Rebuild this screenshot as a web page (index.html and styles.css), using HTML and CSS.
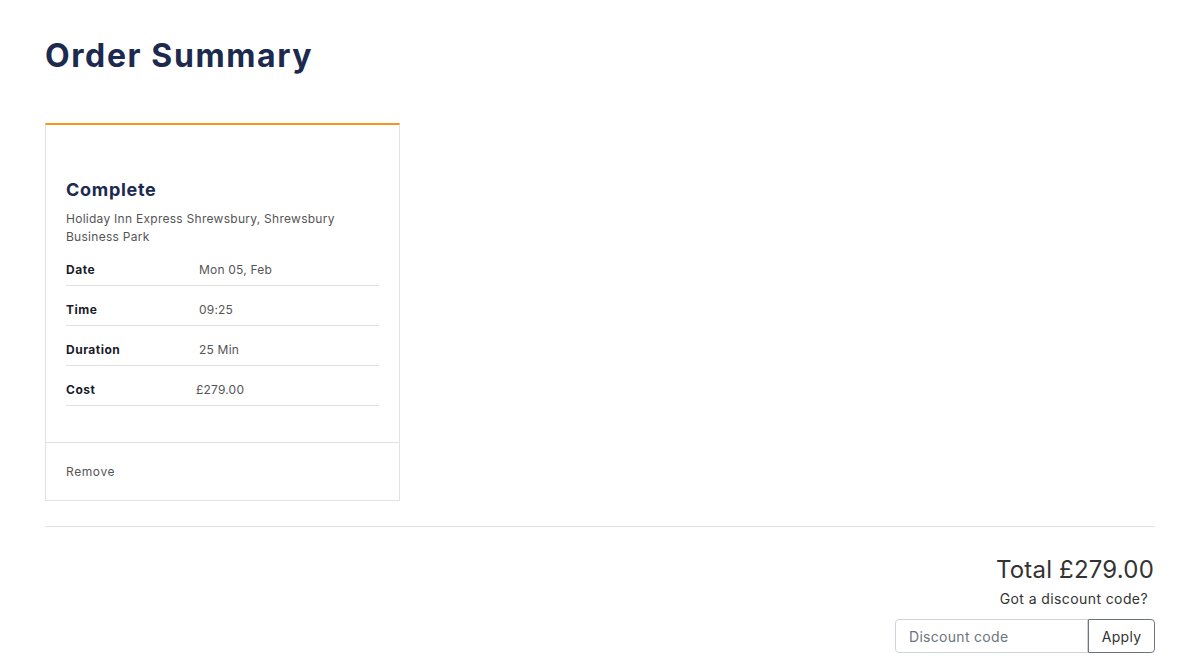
FILE: index.html
```html
<!DOCTYPE html>
<html lang="en">
<head>
<meta charset="utf-8">
<title>Order Summary</title>
<link rel="stylesheet" href="styles.css">
</head>
<body>
<div class="container">
  <h1 class="page-title">Order Summary</h1>
  <div class="card">
    <div class="card-body">
      <h2 class="card-title">Complete</h2>
      <p class="address">Holiday Inn Express Shrewsbury, Shrewsbury<br>Business Park</p>
      <table class="details">
        <tr><th>Date</th><td>Mon 05, Feb</td></tr>
        <tr><th>Time</th><td>09:25</td></tr>
        <tr><th>Duration</th><td>25 Min</td></tr>
        <tr><th>Cost</th><td class="cost">£279.00</td></tr>
      </table>
    </div>
    <div class="card-footer">Remove</div>
  </div>
  <hr class="divider">
  <div class="summary">
    <div class="total">Total £279.00</div>
    <div class="discount-label">Got a discount code?</div>
    <div class="input-group">
      <input class="discount-input" type="text" placeholder="Discount code">
      <button class="apply-btn" type="button">Apply</button>
    </div>
  </div>
</div>
</body>
</html>
```
FILE: styles.css
```css
* { box-sizing: border-box; }
body {
  margin: 0;
  background: #fff;
  font-family: Inter, "Open Sans", sans-serif;
  color: #333;
}
.container {
  width: 1110px;
  margin-left: 45px;
  padding-top: 37px;
}
.page-title {
  margin: 0;
  font-size: 32px;
  line-height: 38px;
  font-weight: 700;
  letter-spacing: 1.6px;
  color: #1b2a4e;
}
.card {
  margin-top: 48px;
  width: 355px;
  border: 1px solid #e2e2e2;
  border-top: 2px solid #f7941d;
}
.card-body {
  padding: 54px 20px 36px;
}
.card-title {
  margin: 0;
  font-size: 18px;
  line-height: 22px;
  font-weight: 700;
  letter-spacing: 0.7px;
  color: #1b2a4e;
}
.address {
  margin: 9px 0 0;
  font-size: 12px;
  line-height: 18px;
  letter-spacing: 0.27px;
  color: #555;
}
.details {
  width: 100%;
  border-collapse: collapse;
  font-size: 12px;
}
.details th, .details td {
  padding: 16px 0 7px;
  line-height: 16px;
  border-bottom: 1px solid #e2e2e2;
  text-align: left;
}
.details th {
  width: 133px;
  font-weight: 700;
  letter-spacing: 0.5px;
  color: #1a1a2a;
}
.details td {
  color: #555;
  letter-spacing: 0.2px;
}
.details td.cost { text-indent: -3px; }
.card-footer {
  border-top: 1px solid #e2e2e2;
  padding: 20px;
  font-size: 12px;
  line-height: 17px;
  letter-spacing: 0.6px;
  color: #555;
}
.divider {
  margin: 25px 0 0;
  border: 0;
  border-top: 1px solid #e2e2e2;
}
.summary {
  display: flex;
  flex-direction: column;
  align-items: flex-end;
}
.total {
  margin-top: 28px;
  font-size: 24px;
  line-height: 30px;
  letter-spacing: 0.2px;
  color: #333;
  padding-right: 1px;
}
.discount-label {
  margin-top: 5px;
  font-size: 14px;
  line-height: 18px;
  letter-spacing: 0.4px;
  color: #333;
  padding-right: 7px;
}
.input-group {
  display: flex;
  margin-top: 11px;
  height: 34px;
}
.discount-input {
  width: 193px;
  height: 34px;
  border: 1px solid #ced4da;
  border-radius: 4px 0 0 4px;
  padding: 0 13px;
  font-family: inherit;
  font-size: 14px;
  letter-spacing: 0.3px;
  color: #333;
  outline: none;
}
.discount-input::placeholder { color: #6c757d; }
.apply-btn {
  width: 67px;
  height: 34px;
  border: 1px solid #6c757d;
  border-radius: 0 4px 4px 0;
  background: #fff;
  font-family: inherit;
  font-size: 14px;
  letter-spacing: 0.3px;
  color: #333;
  padding: 0;
}
```
